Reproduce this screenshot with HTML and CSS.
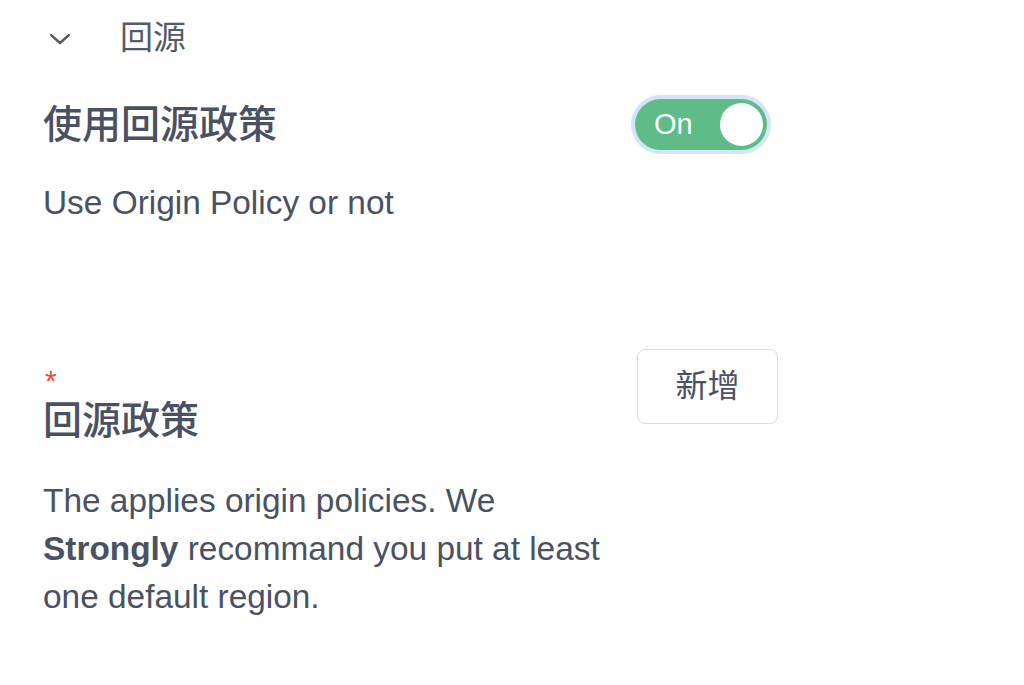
FILE: index.html
```html
<!DOCTYPE html>
<html>
<head>
<meta charset="utf-8">
<link rel="stylesheet" href="styles.css">
</head>
<body>
<div class="page">
  <div class="section-head">
    <svg class="chevron" width="22" height="14" viewBox="0 0 22 14"><path d="M2 3 L11 11 L20 3" fill="none" stroke="#555b66" stroke-width="2.4" stroke-linecap="round" stroke-linejoin="round"/></svg>
    <span class="section-title">回源</span>
  </div>

  <div class="row row-first">
    <div class="left">
      <div class="title">使用回源政策</div>
      <div class="desc desc-first">Use Origin Policy or not</div>
    </div>
    <div class="right">
      <div class="toggle">
        <span class="toggle-label">On</span>
        <span class="knob"></span>
      </div>
    </div>
  </div>

  <div class="row row-second">
    <div class="left">
      <div class="required">*</div>
      <div class="title">回源政策</div>
      <div class="desc">The applies origin policies. We <b>Strongly</b> recommand you put at least one default region.</div>
    </div>
    <div class="right">
      <button class="btn">新增</button>
    </div>
  </div>
</div>
</body>
</html>
```

FILE: styles.css
```css
html, body {
  margin: 0;
  padding: 0;
  background: #ffffff;
}
body {
  font-family: "Liberation Sans", "Noto Sans CJK SC", sans-serif;
  color: #4a5162;
}
.page {
  padding-left: 43px;
  width: 981px;
}
.section-head {
  display: flex;
  align-items: center;
  height: 76px;
}
.chevron {
  margin-left: 6px;
  margin-top: 2px;
}
.section-title {
  margin-left: 49px;
  font-size: 33px;
  color: #555b66;
  line-height: 76px;
}
.row {
  display: flex;
}
.row-first {
  margin-top: 21px;
}
.row-second {
  margin-top: 140px;
}
.left {
  width: 590px;
}
.title {
  font-size: 39px;
  font-weight: 500;
  line-height: 56px;
  color: #4a5162;
}
.desc {
  font-size: 33.4px;
  line-height: 48px;
  width: 570px;
  margin-top: 28px;
}
.desc-first {
  margin-top: 26px;
}
.desc b {
  font-weight: 700;
}
.required {
  color: #e0533a;
  font-size: 30px;
  line-height: 28px;
  height: 26px;
  padding-left: 2px;
}
.toggle {
  margin-top: 2px;
  margin-left: 2px;
  width: 132px;
  height: 51px;
  border-radius: 26px;
  background: #5fbb88;
  box-shadow: 0 0 0 4px #d3e5f8;
  display: flex;
  align-items: center;
  justify-content: space-between;
  padding: 0 4px 0 19px;
  box-sizing: border-box;
}
.toggle-label {
  color: #ffffff;
  font-size: 29px;
  line-height: 51px;
}
.knob {
  width: 43px;
  height: 43px;
  border-radius: 50%;
  background: #ffffff;
}
.btn {
  margin-top: -18px;
  margin-left: 4px;
  width: 141px;
  height: 75px;
  border: 1.5px solid #d8dbe0;
  border-radius: 8px;
  background: #ffffff;
  font-family: "Liberation Sans", "Noto Sans CJK SC", sans-serif;
  font-size: 32px;
  color: #4a5162;
  padding: 0 0 8px 0;
}
```
